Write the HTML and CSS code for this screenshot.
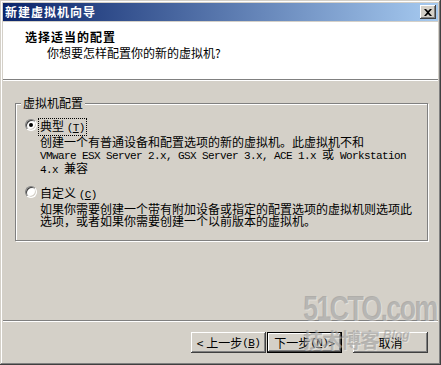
FILE: index.html
```html
<!DOCTYPE html>
<html lang="zh-CN">
<head>
    <meta charset="UTF-8">
    <title>新建虚拟机向导</title>
    <link rel="stylesheet" href="styles.css">
</head>
<body>
    <div class="window">
        <div class="titlebar">
            <span class="title-text">新建虚拟机向导</span>
            <span class="close-btn">
                <svg width="8" height="7" viewBox="0 0 8 7"><path d="M0 0h2l2 2 2-2h2L5 3.5 8 7H6L4 5 2 7H0l3-3.5z" fill="#000"/></svg>
            </span>
        </div>

        <div class="header">
            <div class="header-title">选择适当的配置</div>
            <div class="header-sub">你想要怎样配置你的新的虚拟机?</div>
        </div>

        <div class="content">
            <div class="group">
                <span class="legend">虚拟机配置</span>

                <div class="option">
                    <span class="radio checked"></span>
                    <div class="option-body">
                        <span class="label focused">典型 <span class="mono">(<u>T</u>)</span></span>
                        <div class="desc">创建一个有普通设备和配置选项的新的虚拟机。此虚拟机不和<br><span class="mono">VMware ESX Server 2.x, GSX Server 3.x, ACE 1.x </span>或<span class="mono"> Workstation</span><br><span class="mono">4.x </span>兼容</div>
                    </div>
                </div>

                <div class="option second">
                    <span class="radio"></span>
                    <div class="option-body">
                        <span class="label">自定义 <span class="mono">(<u>C</u>)</span></span>
                        <div class="desc">如果你需要创建一个带有附加设备或指定的配置选项的虚拟机则选项此<br>选项，或者如果你需要创建一个以前版本的虚拟机。</div>
                    </div>
                </div>
            </div>
        </div>

        <div class="footer">
            <div class="btn-row">
                <span class="btn">&lt; 上一步<span class="mono">(<u>B</u>)</span></span>
                <span class="btn default">下一步<span class="mono">(<u>N</u>)</span> &gt;</span>
                <span class="btn cancel">取消</span>
            </div>
        </div>

        <div class="watermark">
            <div class="wm-big">51CTO.com</div>
            <div class="wm-small">技术博客<span class="wm-blog">Blog</span></div>
        </div>
    </div>
</body>
</html>
```

FILE: styles.css
```css
body { margin: 0; padding: 0; background: #d4d0c8; font-family: "Noto Sans CJK SC", "Liberation Sans", sans-serif; font-size: 12px; color: #000; }
.window { position: relative; box-sizing: border-box; width: 441px; height: 365px; padding: 3px; background: #d4d0c8; display: flex; flex-direction: column; overflow: hidden;
    box-shadow: inset -1px -1px 0 #404040, inset 1px 1px 0 #d4d0c8, inset -2px -2px 0 #808080, inset 2px 2px 0 #fff; }

.titlebar { height: 18px; flex-shrink: 0; display: flex; align-items: center; justify-content: space-between; padding: 0 2px 0 2px; background: linear-gradient(to right, #0a246a, #a6caf0); }
.title-text { color: #fff; font-weight: bold; letter-spacing: 1px; line-height: 14px; }
.close-btn { box-sizing: border-box; width: 16px; height: 14px; background: #d4d0c8; display: flex; align-items: center; justify-content: center;
    box-shadow: inset -1px -1px 0 #404040, inset 1px 1px 0 #fff, inset -2px -2px 0 #808080; }

.header { height: 58px; flex-shrink: 0; margin-top: 1px; background: #fff; box-sizing: border-box; padding: 8px 0 0 22px; border-bottom: 1px solid #808080; box-shadow: 0 1px 0 #fff; }
.header-title { font-weight: bold; letter-spacing: 1px; line-height: 14px; }
.header-sub { padding-left: 22px; line-height: 14px; margin-top: 2px; }

.content { flex-grow: 1; padding: 23px 10px 0 12px; }
.group { position: relative; box-sizing: border-box; height: 138px; border: 1px solid #808080; box-shadow: inset 1px 1px 0 #fff, 1px 1px 0 #fff; padding: 14px 0 0 9px; }
.legend { position: absolute; top: -8px; left: 5px; padding: 0 2px; background: #d4d0c8; line-height: 14px; }

.option { display: flex; align-items: flex-start; gap: 3px; }
.option.second { margin-top: 9px; }
.option-body { display: flex; flex-direction: column; align-items: flex-start; }
.label { line-height: 12px; padding: 1px 1px; margin-left: -2px; border: 1px dotted transparent; }
.label.focused { border-color: #000; }
.desc { line-height: 12px; margin-top: 0; white-space: nowrap; }
.mono { font-family: "Liberation Mono", monospace; font-size: 11px; letter-spacing: -0.6px; }

.radio { position: relative; box-sizing: border-box; width: 12px; height: 12px; margin-top: 1px; border-radius: 50%; background: #fff; flex-shrink: 0;
    border: 1px solid; border-color: #808080 #fff #fff #808080; box-shadow: inset 1px 1px 0 #404040, inset -1px -1px 0 #d4d0c8; }
.radio.checked::after { content: ""; position: absolute; left: 3px; top: 3px; width: 4px; height: 4px; border-radius: 50%; background: #000; }

.footer { height: 42px; flex-shrink: 0; border-top: 1px solid #808080; box-shadow: inset 0 1px 0 #fff; box-sizing: border-box; padding: 11px 10px 0 0; }
.btn-row { display: flex; justify-content: flex-end; }
.btn { box-sizing: border-box; width: 75px; height: 21px; display: flex; align-items: center; justify-content: center; background: #d4d0c8; line-height: 12px;
    box-shadow: inset -1px -1px 0 #404040, inset 1px 1px 0 #fff, inset -2px -2px 0 #808080; }
.btn.default { border: 1px solid #000; margin-left: 1px; }
.btn.cancel { margin-left: 11px; }

.watermark { position: absolute; left: 303px; top: 294px; width: 128px; color: rgba(140, 140, 140, 0.5); font-family: "Liberation Sans", sans-serif; font-weight: bold; pointer-events: none; text-shadow: 1px 1px 0 rgba(255, 255, 255, 0.35); }
.wm-big { font-size: 27px; line-height: 22px; letter-spacing: -1.8px; transform: scaleY(1.3); transform-origin: top left; white-space: nowrap; }
.wm-small { display: flex; align-items: flex-start; font-family: "Noto Sans CJK SC", sans-serif; font-size: 20px; line-height: 24px; margin-top: 12px; letter-spacing: -1px; }
.wm-blog { font-family: "Liberation Sans", sans-serif; font-size: 12px; line-height: 14px; font-style: italic; margin-left: 4px; letter-spacing: 0; }
```
